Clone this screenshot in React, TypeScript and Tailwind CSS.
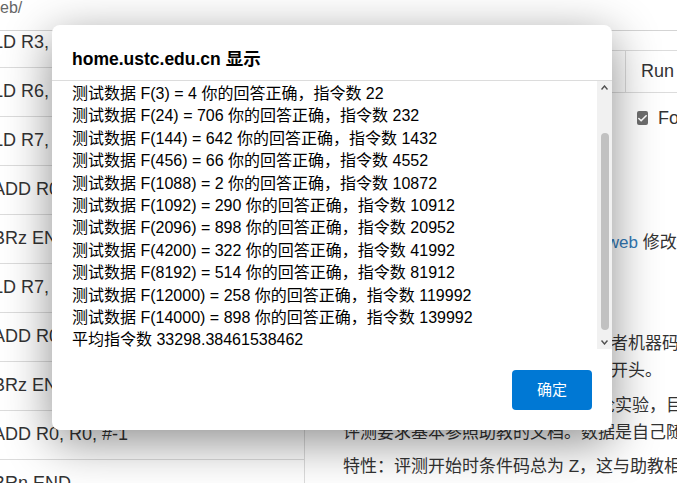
import { Check } from 'lucide-react';

const codeRows = [
  'LD R3, N3',
  'LD R6, N6',
  'LD R7, N7',
  'ADD R0, R0, R3',
  'BRz END',
  'LD R7, N7',
  'ADD R0, R0, R6',
  'BRz END',
  'ADD R0, R0, #-1',
  'BRn END',
];

const results = [
  ['3', '4', '22'],
  ['24', '706', '232'],
  ['144', '642', '1432'],
  ['456', '66', '4552'],
  ['1088', '2', '10872'],
  ['1092', '290', '10912'],
  ['2096', '898', '20952'],
  ['4200', '322', '41992'],
  ['8192', '514', '81912'],
  ['12000', '258', '119992'],
  ['14000', '898', '139992'],
];

function AlertDialog() {
  return (
    <div className="absolute left-[52px] top-[25px] flex h-[405px] w-[560px] flex-col overflow-hidden rounded-[8px] bg-white text-black shadow-[0_12px_48px_rgba(0,0,0,0.45)]">
      <div className="border-b border-[#dcdcdc] px-[20px] pb-[12px] pt-[25px] text-[17.5px] font-bold leading-[18px]">
        home.ustc.edu.cn 显示
      </div>

      {/* message, scrolled to the bottom */}
      <div className="flex h-[268px]">
        <div className="min-w-0 flex-1 overflow-hidden whitespace-nowrap pl-[20px] pt-[2px] text-[16px] leading-[22.4px]">
          {results.map(([n, f, count]) => (
            <div key={n}>
              测试数据 F({n}) = {f} 你的回答正确，指令数 {count}
            </div>
          ))}
          <div>平均指令数 33298.38461538462</div>
        </div>
        <div className="flex w-[15px] shrink-0 flex-col items-center bg-[#f1f1f1]">
          <div className="flex h-[13px] items-center">
            <svg width="7" height="5" viewBox="0 0 7 5">
              <polyline points="0.5,4.5 3.5,1 6.5,4.5" fill="none" stroke="#505050" strokeWidth="1.4" />
            </svg>
          </div>
          <div className="mt-[39px] h-[197px] w-[8px] rounded-full bg-[#c1c1c1]" />
          <div className="flex-1" />
          <div className="flex h-[13px] items-center">
            <svg width="7" height="5" viewBox="0 0 7 5">
              <polyline points="0.5,0.5 3.5,4 6.5,0.5" fill="none" stroke="#505050" strokeWidth="1.4" />
            </svg>
          </div>
        </div>
      </div>

      <div className="flex justify-end pr-[20px] pt-[21px]">
        <button className="h-[40px] w-[80px] rounded-[4px] bg-[#0078d4] text-[15px] text-white">确定</button>
      </div>
    </div>
  );
}

export default function App() {
  return (
    <div className="relative h-[483px] w-[677px] overflow-hidden bg-white font-['Liberation_Sans','Noto_Sans_CJK_SC',sans-serif] text-[#333]">
      <div className="h-[31px] border-b border-[#d4d4d4] text-[16px] leading-[16px] text-[#666]">eb/</div>

      <div className="flex h-[452px]">
        {/* code listing */}
        <div className="w-[305px] shrink-0 overflow-hidden border-r border-[#dcdcdc]">
          <div className="-mt-[12px]">
            {codeRows.map((row, i) => (
              <div
                key={i}
                className="-ml-[7px] flex h-[49px] items-center whitespace-nowrap border-b border-[#dcdcdc] pb-[2px] text-[18px]"
              >
                {row}
              </div>
            ))}
          </div>
        </div>

        {/* description */}
        <div className="min-w-0 flex-1 overflow-hidden">
          <div className="mt-[19px] flex h-[43px] border-y border-[#dcdcdc]">
            <div className="w-[320px] shrink-0" />
            <div className="flex items-center whitespace-nowrap border-l border-[#dcdcdc] pl-[15px] text-[18px]">Run</div>
          </div>

          <div className="mt-[14px] flex h-[22px] items-center whitespace-nowrap">
            <div className="w-[332px] shrink-0" />
            <span className="flex h-[14px] w-[14px] items-center justify-center rounded-[2px] bg-[#6e6e6e]">
              <Check size={11} strokeWidth={3.5} color="white" />
            </span>
            <span className="ml-[10px] text-[18px]">Format</span>
          </div>

          <div className="whitespace-nowrap pl-[38px] text-[17px] leading-[27px]">
            <p className="mt-[100px] pl-[4px]">
              可以在线使用助教提供的工具，在 <span className="text-[#337ab7]">web</span> 修改代码后提交
            </p>
            <p className="-ml-[4px] mt-[74px]">
              提交的文件可以是汇编程序代码，或者机器码文件
              <br />
              文件。机器码文件第一行必须以地址开头。
            </p>
            <p className="mt-[8px]">
              本评测用于中国科大计算机系统概论实验，目前仅支持
              <br />
              评测要求基本参照助教的文档。数据是自己随机生成的
            </p>
            <p className="mt-[7px]">特性：评测开始时条件码总为 Z，这与助教相同</p>
          </div>
        </div>
      </div>

      <AlertDialog />
    </div>
  );
}
